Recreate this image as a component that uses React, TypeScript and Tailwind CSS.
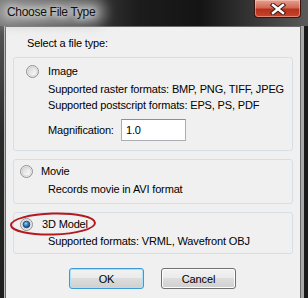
import React from "react";

function Radio({ checked }: { checked?: boolean }) {
  return (
    <svg width="13" height="13" viewBox="0 0 13 13" className="shrink-0">
      <defs>
        <linearGradient id={checked ? "rgc" : "rgu"} x1="0" y1="0" x2="1" y2="1">
          <stop offset="0" stopColor="#d4d4d4" />
          <stop offset="1" stopColor="#ffffff" />
        </linearGradient>
        <radialGradient id="dot" cx="0.4" cy="0.35" r="0.7">
          <stop offset="0" stopColor="#9fd3f7" />
          <stop offset="0.5" stopColor="#2a7fc8" />
          <stop offset="1" stopColor="#0c3c6e" />
        </radialGradient>
      </defs>
      <circle cx="6.5" cy="6.5" r="6" fill="#f4f4f4" stroke="#8e8f8f" strokeWidth="1" />
      <circle cx="6.5" cy="6.5" r="4.6" fill={`url(#${checked ? "rgc" : "rgu"})`} stroke="#c6c6c6" strokeWidth="0.8" />
      {checked && <circle cx="6.5" cy="6.5" r="3.3" fill="url(#dot)" stroke="#1b3c5c" strokeWidth="0.8" />}
    </svg>
  );
}

export default function App() {
  return (
    <div
      className="w-[308px] h-[298px] flex flex-col overflow-hidden bg-[#1f2320] text-[11px] tracking-[-0.15px] text-black whitespace-nowrap"
      style={{ fontFamily: '"Liberation Sans", Arial, sans-serif' }}
    >
      {/* Title bar */}
      <div className="relative h-[26px] shrink-0 bg-[linear-gradient(90deg,#6e6e6e_0%,#4a4a4a_20%,#1c1c1c_45%,#141414_65%,#3c3c3c_85%,#5a5a5a_100%)]">
        <div className="absolute left-[-6px] top-[-2px] w-[112px] h-[28px] rounded-[14px] bg-[#b9b9b9] opacity-60 blur-[6px]" />
        <div className="relative pl-[7px] pt-[4px] text-[12px] tracking-[-0.3px] leading-[16px] text-[#111] [text-shadow:0_0_6px_#fff,0_0_10px_#fff]">
          Choose File Type
        </div>
        <div className="absolute left-[254px] top-0 w-[47px] h-[18px] rounded-b-[4px] border border-t-0 border-[#3a1410] bg-[linear-gradient(180deg,#e8a090_0%,#d06a55_45%,#b9301c_55%,#c8452c_100%)] flex items-center justify-center shadow-[inset_0_0_0_1px_rgba(255,220,210,0.45)]">
          <svg width="16" height="12" viewBox="0 0 16 12">
            <path d="M3 2 L13 10 M13 2 L3 10" stroke="#3d1c16" strokeWidth="4.4" strokeLinecap="square" />
            <path d="M3 2 L13 10 M13 2 L3 10" stroke="#ffffff" strokeWidth="2.4" strokeLinecap="square" />
          </svg>
        </div>
      </div>

      {/* Body row */}
      <div className="flex flex-1 min-h-0">
        <div className="w-[5px] shrink-0 bg-[linear-gradient(180deg,#555_0%,#2a2c2a_40%,#1c1f1c_100%)] border-r border-[#b8b8b8]" />
        <div className="w-[296px] shrink-0 bg-[#f0f0f0] border-t border-l border-r border-[#6a6a6a] pl-[7px] pr-[7px]">
          <div className="pl-[14px] pt-[8px] leading-[16px]">Select a file type:</div>

          {/* Image box */}
          <div className="mt-[6px] h-[94px] rounded-[3px] border border-[#d5dfe5] pt-[5px]">
            <div className="flex items-center pl-[12px] leading-[16px]">
              <Radio />
              <span className="ml-[9px]">Image</span>
            </div>
            <div className="pl-[34px] mt-[2px] leading-[16px]">Supported raster formats: BMP, PNG, TIFF, JPEG</div>
            <div className="pl-[34px] leading-[16px]">Supported postscript formats: EPS, PS, PDF</div>
            <div className="flex items-center pl-[34px] mt-[6px]">
              <span className="w-[73px] leading-[16px]">Magnification:</span>
              <div className="w-[65px] h-[22px] bg-white border border-[#abadb3] border-t-[#8e8f8f] flex items-center pl-[4px] leading-[16px]">
                1.0
              </div>
            </div>
          </div>

          {/* Movie box */}
          <div className="mt-[8px] h-[45px] rounded-[3px] border border-[#d5dfe5] pt-[3px]">
            <div className="flex items-center pl-[6px] leading-[16px]">
              <Radio />
              <span className="ml-[8px]">Movie</span>
            </div>
            <div className="pl-[34px] mt-[2px] leading-[16px]">Records movie in AVI format</div>
          </div>

          {/* 3D box */}
          <div className="relative mt-[8px] h-[42px] rounded-[3px] border border-[#d5dfe5] pt-[3px]">
            <div className="flex items-center pl-[6px] leading-[16px]">
              <Radio checked />
              <span className="ml-[9px]">3D Model</span>
            </div>
            <div className="pl-[34px] mt-[1px] leading-[16px]">Supported formats: VRML, Wavefront OBJ</div>
            <svg className="absolute left-[-5px] top-[-2px]" width="88" height="26" viewBox="0 0 88 26">
              <ellipse cx="44" cy="13" rx="42" ry="10.5" fill="none" stroke="#b3191e" strokeWidth="2" transform="rotate(-1.5 44 13)" />
            </svg>
          </div>

          {/* Buttons */}
          <div className="flex mt-[14px] pl-[56px] gap-[17px]">
            <button className="w-[75px] h-[21px] rounded-[3px] border border-[#3c9ad6] bg-[linear-gradient(180deg,#f2f2f2_0%,#ebebeb_45%,#dddddd_50%,#cfcfcf_100%)] shadow-[inset_0_0_0_1px_#a9e2fb] leading-[16px]">
              OK
            </button>
            <button className="w-[75px] h-[21px] rounded-[3px] border border-[#707070] bg-[linear-gradient(180deg,#f2f2f2_0%,#ebebeb_45%,#dddddd_50%,#cfcfcf_100%)] shadow-[inset_0_0_0_1px_#fcfcfc] leading-[16px]">
              Cancel
            </button>
          </div>
        </div>
        <div className="w-[7px] shrink-0 flex">
          <div className="w-[3px] bg-[#a8a8a8]" />
          <div className="flex-1 bg-[#1a1a1a]" />
        </div>
      </div>
    </div>
  );
}
